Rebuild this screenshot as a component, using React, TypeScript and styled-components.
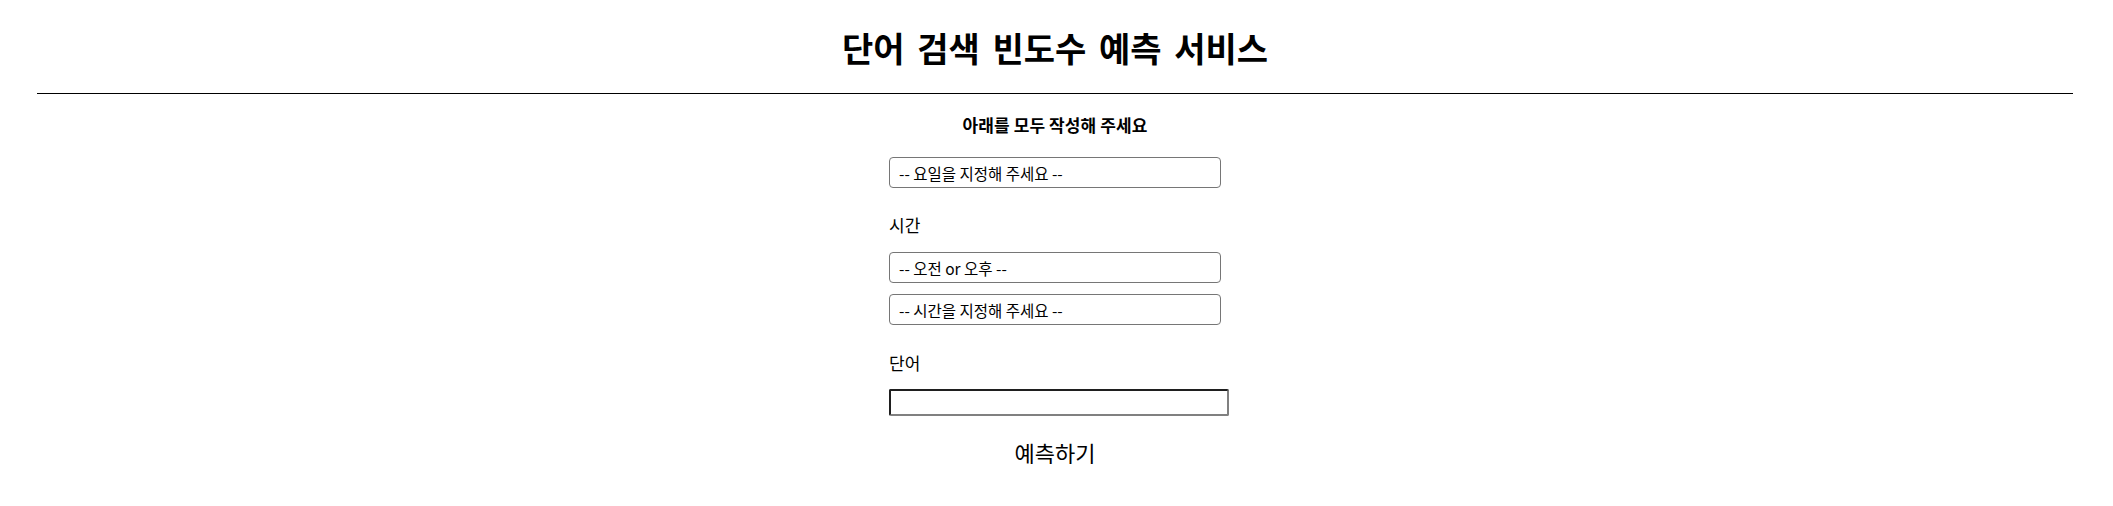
import React from "react";
import styled, { createGlobalStyle } from "styled-components";

const GlobalStyle = createGlobalStyle`
  html, body {
    margin: 0;
    padding: 0;
    background: #ffffff;
  }
  body {
    font-family: "Noto Sans CJK KR", "Noto Sans", sans-serif;
    color: #000000;
  }
`;

const Page = styled.div`
  display: flex;
  flex-direction: column;
  align-items: stretch;
  padding: 0 40px 0 37px;
`;

const Title = styled.h1`
  margin: 28px 0 0;
  height: 40px;
  line-height: 40px;
  font-size: 34px;
  font-weight: 700;
  text-align: center;
  word-spacing: 5px;
`;

const Rule = styled.hr`
  margin: 25px 0 0;
  border: none;
  border-top: 1px solid #000000;
  height: 0;
`;

const Form = styled.form`
  display: flex;
  flex-direction: column;
  align-items: center;
`;

const Subtitle = styled.h4`
  margin: 21px 0 0;
  height: 20px;
  line-height: 20px;
  font-size: 17px;
  font-weight: 700;
  text-align: center;
  letter-spacing: 0.1px;
`;

const Column = styled.div`
  width: 332px;
  display: flex;
  flex-direction: column;
  align-items: flex-start;
`;

const Label = styled.label<{ $top: number }>`
  display: block;
  margin-top: ${(p) => p.$top}px;
  height: 20px;
  line-height: 20px;
  font-size: 17px;
`;

const Select = styled.select<{ $top: number }>`
  appearance: none;
  -webkit-appearance: none;
  box-sizing: border-box;
  width: 332px;
  height: 31px;
  margin: ${(p) => p.$top}px 0 0;
  padding: 0 9px;
  border: 1px solid #767676;
  border-radius: 4px;
  background: #ffffff;
  font-family: "Noto Sans CJK KR", "Noto Sans", sans-serif;
  font-size: 15.5px;
  color: #000000;
  outline: none;
`;

const TextInput = styled.input`
  box-sizing: border-box;
  width: 340px;
  height: 27px;
  margin: 16px 0 0;
  padding: 1px 2px;
  border-style: solid;
  border-width: 2px;
  border-color: #1f1f1f #808080 #808080 #1f1f1f;
  border-radius: 2px;
  background: #ffffff;
  font-family: "Noto Sans CJK KR", "Noto Sans", sans-serif;
  font-size: 14px;
  outline: none;
`;

const SubmitButton = styled.button`
  margin: 24px 0 0;
  padding: 0;
  height: 24px;
  line-height: 24px;
  border: none;
  background: none;
  font-family: "Noto Sans CJK KR", "Noto Sans", sans-serif;
  font-size: 22px;
  color: #000000;
  cursor: pointer;
`;

export default function App() {
  return (
    <>
      <GlobalStyle />
      <Page>
        <Title>단어 검색 빈도수 예측 서비스</Title>
        <Rule />
        <Form onSubmit={(e) => e.preventDefault()}>
          <Subtitle>아래를 모두 작성해 주세요</Subtitle>
          <Column>
            <Select $top={22} defaultValue="">
              <option value="">-- 요일을 지정해 주세요 --</option>
              <option value="mon">월요일</option>
              <option value="tue">화요일</option>
              <option value="wed">수요일</option>
              <option value="thu">목요일</option>
              <option value="fri">금요일</option>
              <option value="sat">토요일</option>
              <option value="sun">일요일</option>
            </Select>
            <Label $top={27}>시간</Label>
            <Select $top={17} defaultValue="">
              <option value="">-- 오전 or 오후 --</option>
              <option value="am">오전</option>
              <option value="pm">오후</option>
            </Select>
            <Select $top={11} defaultValue="">
              <option value="">-- 시간을 지정해 주세요 --</option>
              {Array.from({ length: 12 }, (_, i) => (
                <option key={i} value={String(i + 1)}>
                  {i + 1}시
                </option>
              ))}
            </Select>
            <Label $top={28}>단어</Label>
            <TextInput type="text" />
          </Column>
          <SubmitButton type="submit">예측하기</SubmitButton>
        </Form>
      </Page>
    </>
  );
}
